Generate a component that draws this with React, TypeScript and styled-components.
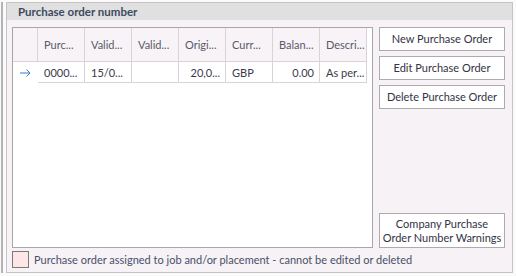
import React from "react"
import styled, { createGlobalStyle } from "styled-components"

const GlobalStyle = createGlobalStyle`
  html, body {
    margin: 0;
    padding: 0;
    background: #ffffff;
  }
  body {
    font-family: Lato, "DejaVu Sans", sans-serif;
  }
`

const Frame = styled.div`
  width: 516px;
  height: 276px;
  box-sizing: border-box;
  padding: 2px 3px 3px 1px;
  display: flex;
  background: #fafafa;
`

const Bar = styled.div`
  width: 2px;
  background: #b3b3b3;
  margin-right: 3px;
`

const Group = styled.div`
  flex: 1;
  display: flex;
  flex-direction: column;
  border: 1px solid #c6c2c6;
  background: #f6f2f5;
`

const Header = styled.div`
  height: 17px;
  background: #e0e0e0;
  display: flex;
  align-items: center;
  padding-left: 11px;
  font-family: Lato, sans-serif;
  font-size: 11.5px;
  font-weight: 700;
  color: #3d4a5f;
`

const Body = styled.div`
  flex: 1;
  display: flex;
  flex-direction: column;
  padding: 7px 6px 3px 5px;
  gap: 2px;
`

const Main = styled.div`
  flex: 1;
  display: flex;
  gap: 6px;
`

const GridBox = styled.div`
  width: 361px;
  box-sizing: border-box;
  border: 1px solid #a9a6a9;
  background: #ffffff;
`

const Table = styled.div`
  display: grid;
  grid-template-columns: 25px repeat(7, 47px) 1fr;
`

const HeadCell = styled.div`
  height: 34px;
  box-sizing: border-box;
  background: #f7f3f6;
  border-right: 1px solid #d8d3d7;
  border-bottom: 1px solid #d8d3d7;
  display: flex;
  align-items: center;
  padding-left: 6px;
  font-size: 11px;
  color: #5a5a6a;
  white-space: nowrap;
  overflow: hidden;
`

const Cell = styled.div<{ $right?: boolean }>`
  height: 21px;
  box-sizing: border-box;
  border-right: 1px solid #d8d3d7;
  border-bottom: 1px solid #d8d3d7;
  display: flex;
  align-items: center;
  justify-content: ${(p) => (p.$right ? "flex-end" : "flex-start")};
  padding: 0 5px 0 6px;
  font-size: 11px;
  color: #3a3a4a;
  white-space: nowrap;
  overflow: hidden;
`

const Indicator = styled.div`
  height: 21px;
  display: flex;
  align-items: center;
  justify-content: center;
`

const Side = styled.div`
  width: 126px;
  display: flex;
  flex-direction: column;
  gap: 5px;
`

const Button = styled.button`
  height: 24px;
  box-sizing: border-box;
  border: 1px solid #aeaaae;
  background: #ffffff;
  font-family: Lato, sans-serif;
  font-size: 11px;
  color: #333344;
  padding: 0;
  line-height: 14px;
  white-space: nowrap;
`

const TallButton = styled(Button)`
  height: 35px;
  margin-top: auto;
`

const Legend = styled.div`
  height: 19px;
  display: flex;
  align-items: center;
  gap: 5px;
  font-size: 11px;
  color: #48506a;
`

const Swatch = styled.div`
  width: 15px;
  height: 15px;
  border: 1px solid #7a7a7a;
  background: #ffe6e6;
`

const columns = ["Purc...", "Valid...", "Valid...", "Origi...", "Curr...", "Balan...", "Descri..."]

export default function App() {
  return (
    <>
      <GlobalStyle />
      <Frame>
        <Bar />
        <Group>
          <Header>Purchase order number</Header>
          <Body>
            <Main>
              <GridBox>
                <Table>
                  <HeadCell />
                  {columns.map((c, i) => (
                    <HeadCell key={i}>{c}</HeadCell>
                  ))}
                  <div />
                  <Indicator>
                    <svg width="11" height="8" viewBox="0 0 11 8">
                      <path d="M0 4h10M6.5 0.5L10 4L6.5 7.5" stroke="#3b78d8" strokeWidth="1" fill="none" />
                    </svg>
                  </Indicator>
                  <Cell>0000...</Cell>
                  <Cell>15/0...</Cell>
                  <Cell />
                  <Cell $right>20,0...</Cell>
                  <Cell>GBP</Cell>
                  <Cell $right>0.00</Cell>
                  <Cell>As per...</Cell>
                  <div />
                </Table>
              </GridBox>
              <Side>
                <Button>New Purchase Order</Button>
                <Button>Edit Purchase Order</Button>
                <Button>Delete Purchase Order</Button>
                <TallButton>
                  Company Purchase
                  <br />
                  Order Number Warnings
                </TallButton>
              </Side>
            </Main>
            <Legend>
              <Swatch />
              Purchase order assigned to job and/or placement - cannot be edited or deleted
            </Legend>
          </Body>
        </Group>
      </Frame>
    </>
  )
}
